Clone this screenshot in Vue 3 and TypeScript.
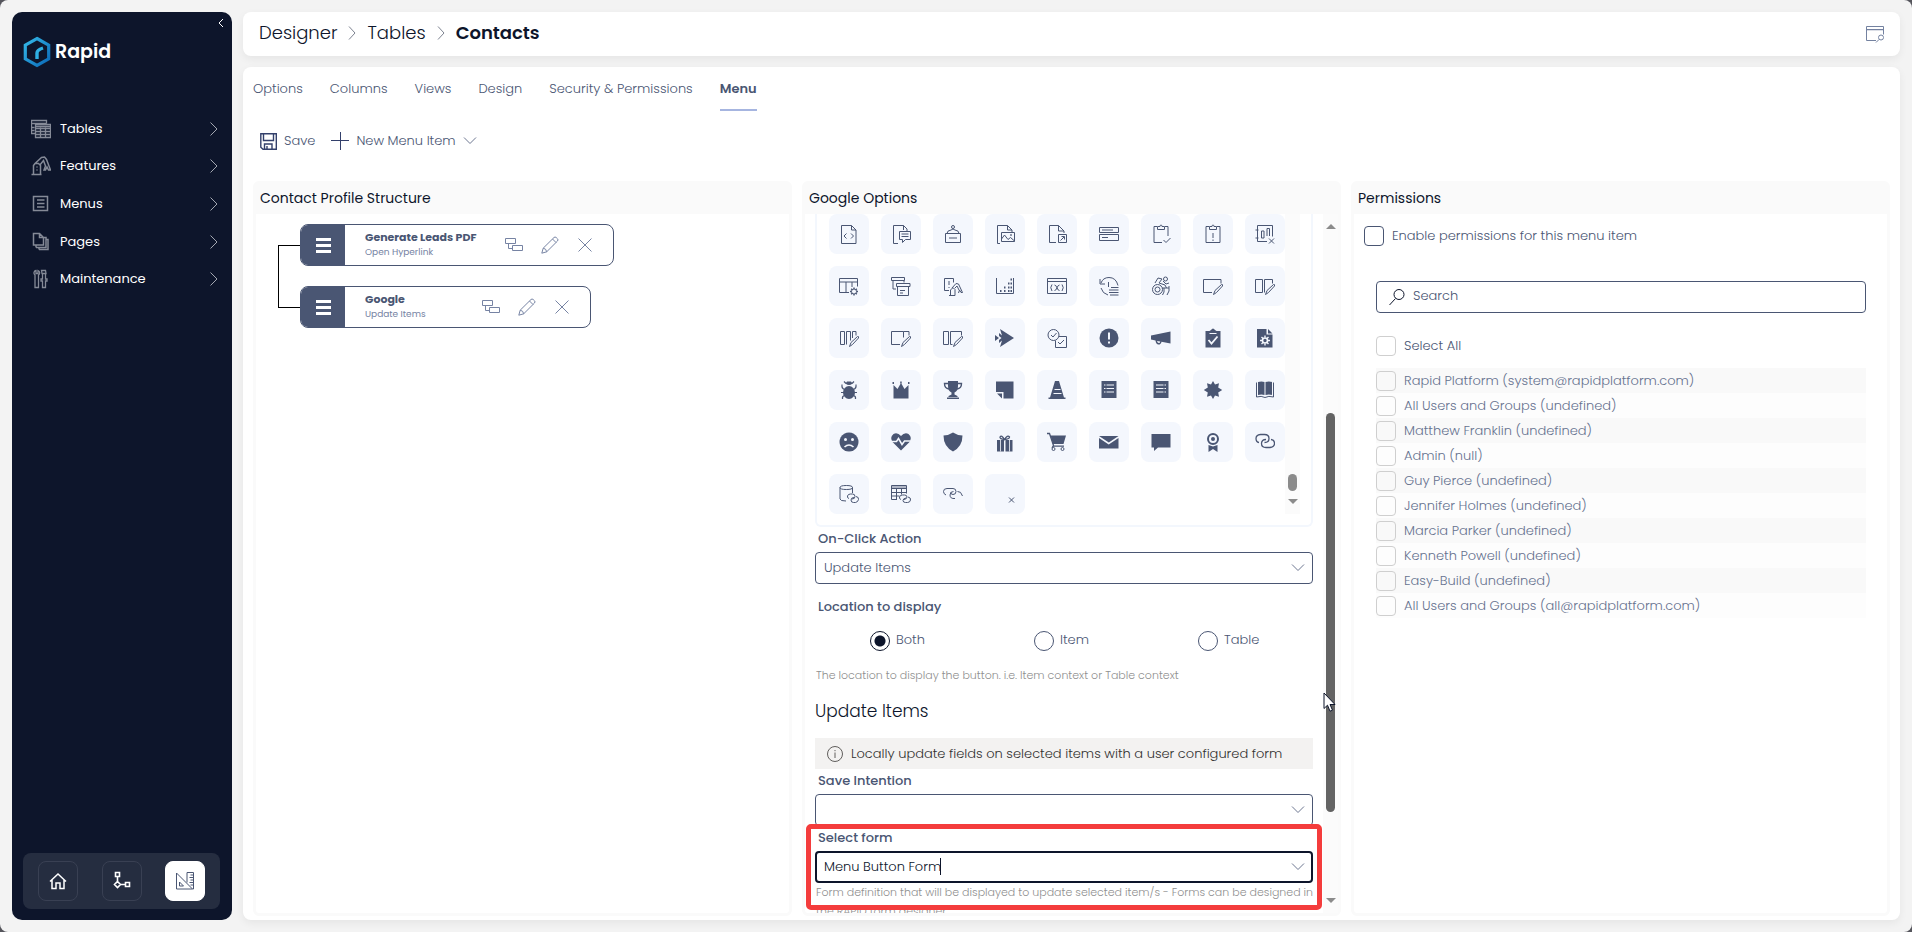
<script setup lang="ts">
import { ref } from 'vue'

type Glyph = string

const navItems: { label: string; icon: Glyph }[] = [
  {
    label: 'Tables',
    icon: '<path d="M4.5 14.500h-4v-13h15v3M.5 4.500h15M.5 8.500h3M.500 11.500h3M4.500 5.500h15v13h-15zM4.500 9.500h15M4.500 12.500h15M4.500 15.500h15M9.500 8.500v10M14.500 8.500v10M4.500 7.500h15" stroke-width="1.300"/>'
  },
  {
    label: 'Features',
    icon: '<path d="M.5 18.500h10M2.500 18.500v-9l1.500-2h3.500l2 2v9M4 7.500l6.500-6 3-.5 2 2.500 4 10.500h-2l-1.500-3-1.500 3h-1.500l1.500-4-2-5.500-4 5" stroke-width="1.500"/><path d="M5.500 11h1M5.500 14h1" stroke-width="1.500"/>'
  },
  {
    label: 'Menus',
    icon: '<path d="M2.500 2.500h14v14h-14zM6 6h7.500M6 9.500h7.500M6 13h7.500" stroke-width="1.500"/>'
  },
  {
    label: 'Pages',
    icon: '<path d="M2.500 1.500h6l4 4v7.500h-10zM8.500 1.500v4h4M5 15.500h10v-10h-2M8 17.500h9v-10h-2M5 13v2.500M8 15.500v2" stroke-width="1.500"/>'
  },
  {
    label: 'Maintenance',
    icon: '<path d="M5 1.500a2.500 2.500 0 0 0-1 4.500v12.500h3.500v-12.500a2.500 2.500 0 0 0-.5-4.500v3h-2zM10.500 1.500h4l.5 3h-4zM11.500 5v5h-1.500v2h1.500v6.500h3v-6.500h1.500v-2h-1.500v-5" stroke-width="1.300"/>'
  }
]

const tabs = ['Options', 'Columns', 'Views', 'Design', 'Security & Permissions', 'Menu']
const activeTab = ref('Menu')

const entries = [
  { title: 'Generate Leads PDF', action: 'Open Hyperlink' },
  { title: 'Google', action: 'Update Items' }
]

const pencil = '<path d="M10.500 18.500l1.500-4 6.500-6q1.500-.5 1 1.500l-6 6.500z" fill="#f4f7fd"/>'
const clip = '<path d="M6 2.500h-3v16h14v-16h-3M6.500 5.500v-3h2.500q0-1.500 1-1.500t1 1.500h2.500v3z"/>'
const solid = (d: string): Glyph => `<path d="${d}" fill="currentColor" stroke="none"/>`

const glyphs: Glyph[] = [
  '<path d="M2.500 1.500h10l4.500 4.500v13.500h-14.500zM12.500 1.500v4.500h4.500M7.500 9.500l-2.500 2.500 2.500 2.500M12 9.500l2.500 2.500-2.500 2.500"/>',
  '<path d="M7 19.500h-4.500v-18h10l3.500 3.500v2M12.500 1.500v4.500M8.500 7.500h11v8h-5l-3 3v-3h-3zM10.500 10h7M10.500 12.500h7"/>',
  '<path d="M2.500 9.500h15v9h-15zM6 14h8M4 9.500q0-3 4-3.500l2-1 2 1q4 .5 4 3.500"/><circle cx="10" cy="3" r="1.500"/>',
  '<path d="M5 19.500h-2.500v-18h10l4.500 4.500v2M12.500 1.500v4.500h4.500M6.500 8.500h13v9h-13zM6.500 15l3-4 3.500 4.500 2.500-2 4 3.500"/><circle cx="16" cy="11" r=".5"/>',
  '<path d="M9 18.500h-6.500v-17h9l5.500 5.500v2M11.500 1.500v5.500h5.500M11.500 10.500h8v8h-8zM13.500 16.500l3.500-3.500M14.500 12.500h3v3"/>',
  '<path d="M.5 3.500h19v5h-19zM.5 10.500h19v6h-19zM3 6h11M3 13.500h6"/>',
  '<path d="M6 2.500h-3v16h8M17 12v-9.500h-3M6.500 5.500v-3h2.500q0-1.500 1-1.500t1 1.500h2.500v3zM12.500 16l2.500 2.500 4.500-4.500"/>',
  clip + '<path d="M10 9v5M10 15.500v1.500"/>',
  '<path d="M12 17.500h-9.500v-16h15v11M.5 6h3M.5 14h3M6.500 14v-7h2.500v7zM12 12v-7.500h2.500v7.500M14 14.500l5 5M19 14.500l-5 5"/>',
  '<path d="M10 16.500h-9.500v-14h18v8M.5 6h18M7 6v10.500M13 6v5"/><circle cx="15" cy="15.500" r="2.500"/><path d="M15 11.500v1.500M15 18v1.500M11 15.500h1.500M17.500 15.500h1.500M12.200 12.700l1 1M16.800 17.300l1 1M17.800 12.700l-1 1M13.200 17.300l-1 1" stroke-width="1.400"/>',
  '<path d="M.5 1.500h13v3h-13zM2 4.500v8.500h3M13 4.500v2M5.500 7.500h13.500v3h-13.500zM6.500 10.500v9h11v-9M9 14.500h5M9 17h3"/>',
  '<path d="M6 14.500h-4.500v-12h9v4M6 5v4M6 11v1M6 19.500h6M7.500 19.500v-5.500l2-2h1l1.500 1.500v6M9 12l4-4.500 2.500.5 4 8.500h-1.500l-1.500-2.500-1 3M12 12l2-2 2 4"/>',
  '<path d="M1.500 2v15.500h17v-15.500"/><path d="M5 15h1.500M9 15h1.500M13 15h1.500M9 11.500h1.500M13 11.500h1.500M13 7.500h1.500M15.500 3.500h1.500M15.500 7.500h1.500M15.500 11.500h1.500M15.500 15h1.500" stroke-width="1.800"/>',
  '<path d="M.5 2.500h19v15h-19zM.5 5.500h19M5 8.500q-2.500 3 0 6.500M15 8.500q2.500 3 0 6.500M7.500 9q1.500 0 2.500 2.800t2.500 2.700M12.500 9q-1.500 0-2.500 2.800t-2.500 2.700"/>',
  '<path d="M2 7q2-5.500 8-5.500 7 0 9 8M1 3v5h5M2 12q1.500 5.500 7 7M9.500 6v5M12 11.500h7.500M10 14h9.500M10 16.500h9.500M11 19h8.500"/>',
  '<circle cx="6.500" cy="13.500" r="5"/><circle cx="6.500" cy="13.500" r="2.500"/><circle cx="14.500" cy="3" r="2"/><path d="M4 7l3-5 4 1-3 4M8 7l6 2 1.500 3M11 12h7M13 12v4l-1.500 3M18 10v5l-2 4M12 5l3 3 3-1"/>',
  '<path d="M9 16.500h-8.500v-13h17.500v4"/>' + pencil,
  '<path d="M.5 3.500h7v13h-7zM9.500 3.500h8v4M9.500 3.500v13"/>' + pencil,
  '<path d="M1.500 3.500h4v13h-4zM7.500 16.500v-13h4v9M13.500 10v-6.500h3.500v4"/>' + pencil,
  '<path d="M9 16.500h-8.500v-13h12v6M12.500 3.500h5.500v4"/>' + pencil,
  '<path d="M.5 3.500h5v13h-5zM7.500 16.500v-13h11v4M7.500 16.500h2"/>' + pencil,
  solid('M5 1l14 9-14 9 2-6.500-3 2.500v-3l2.500-2-2.500-2v-3l3 2.500zM0 7l4 3-4 3z'),
  '<circle cx="6.500" cy="7" r="5.500"/><path d="M4 7l2 2 3.500-4M12 8.500h7.500v11h-11v-7M11 14l2 2 4-4"/>',
  '<circle cx="10" cy="10" r="9.500" fill="currentColor" stroke="none"/><path d="M10 4.500v7M10 13.500v2" stroke="#f4f7fd" stroke-width="2"/>',
  solid('M0 7.500l19.500-4v12l-9-1.800q-.5 2.800-3 2.800t-3-4l-4.500-1zM6 13q.5 2 1.800 2t1.500-1.600z'),
  solid('M2.500 3h4l1.500-1q1-1.500 2-1.500t2 1.500l1.500 1h4v16.500h-15z') + '<path d="M5.500 12l3 3.500 6-7" stroke="#f4f7fd" stroke-width="1.800"/><path d="M6.500 5.500h7" stroke="#f4f7fd"/>',
  solid('M2 1h9.500v5.500h6v13h-15.500zM13 1l4.500 4.500h-4.500z') + '<circle cx="10" cy="12.500" r="2.500" stroke="#f4f7fd" stroke-width="1.600"/><path d="M10 7.500v2M10 15.500v2M5 12.500h2M13 12.500h2M6.500 9l1.500 1.500M12 14.500l1.500 1.500M13.500 9l-1.500 1.500M8 14.500l-1.500 1.500" stroke="#f4f7fd" stroke-width="1.400"/>',
  '<ellipse cx="10" cy="12.500" rx="6" ry="6.500" fill="currentColor" stroke="none"/><path d="M6.500 3.500q3.500 3 7 0l-1.500-2h-4z" fill="currentColor" stroke="none"/><path d="M5.500 9.500q-3-1-2.500-5M14.500 9.500q3-1 2.500-5M5 12.500h-3M15 12.500h3M5.500 15.500q-2.500.5-2 3.500M14.500 15.500q2.500.5 2 3.500M5 1.500l2 2M15 1.500l-2 2" stroke-width="1.200"/>',
  solid('M2.500 5l4 4 3.500-6 3.500 6 4-4v13.500h-15z') + '<path d="M1.500 3h1.500M9.200 2.500h1.500M17 3h1.500" stroke-width="1.800"/>',
  solid('M5 1h10v5q0 5-3.500 6.500v2l3 1.500v1h-9v-1l3-1.500v-2q-3.500-1.500-3.500-6.500zM4 17.500h12v1.500h-12z') + '<path d="M5 3.500h-3.500q0 5 4.500 5.500M15 3.500h3.500q0 5-4.500 5.500" stroke-width="1.400"/>',
  solid('M1 1.500h17.500v17h-10v-6.500h-7.500zM2 13.500h5v5z'),
  solid('M8 1h4l5 16.500h1.500v1.500h-17v-1.500h1.500z') + '<path d="M7.500 9.500h6M6.500 13.500h8" stroke="#f4f7fd" stroke-width="1.200"/>',
  solid('M2.500 1h15v17h-15z') + '<path d="M5 5h1.500M7.500 5h7.500M5 8.500h1.500M7.500 8.500h7.500M5 12h1.500M7.500 12h7.500" stroke="#f4f7fd" stroke-width="1.200"/>',
  solid('M2.500 1h15v17h-15z') + '<path d="M5 5h7.500M13.500 5h1.500M5 8.500h7.500M13.500 8.500h1.500M5 12h7.500M13.500 12h1.500" stroke="#f4f7fd" stroke-width="1.200"/>',
  solid('M10 1l2 3.500 4-1.200-.8 4.200 4 2.500-4 2.500.8 4.200-4-1.200-2 3.500-2-3.500-4 1.200.8-4.200-4-2.500 4-2.500-.8-4.200 4 1.200z'),
  solid('M3 2q3.500-1 6.500 0v13q-3-1-6.500 0zM10.500 2q3.500-1 6.500 0v13q-3-1-6.500 0z') + '<path d="M1.500 2.500v14.500q5-1.500 8.500.5 3.500-2 8.500-.5v-14.500"/>',
  solid('M10 .5a9.500 9.500 0 1 0 .01 0z') + '<path d="M5.500 15q4.500-4 9 0" stroke="#f4f7fd" stroke-width="1.600"/><circle cx="6.500" cy="7.500" r="1.500" fill="#f4f7fd" stroke="none"/><circle cx="13.500" cy="7.500" r="1.500" fill="#f4f7fd" stroke="none"/>',
  solid('M10 18.500l-8.500-8.500q-3-5 1-8 4-2 7.500 2 3.500-4 7.500-2 4 3 1 8z') + '<path d="M.5 9.500h5l2-3 3.500 6 2.500-3.500h6" stroke="#f4f7fd" stroke-width="1.500"/>',
  solid('M10 .5q4.500 3 9.500 3 0 11-9.500 16-9.500-5-9.500-16 5 0 9.500-3z'),
  solid('M2 8h7v11.500h-7zM10.500 8h7v11.500h-7z') + '<path d="M5.500 8v11.500M14.500 8v11.500" stroke="#f4f7fd" stroke-width=".8"/><path d="M9.500 7.500q-5-.5-4.500-2.500 1.500-2.500 4.500 2.500 3-5 5-2.500 0 2-5 2.500" stroke-width="1.300"/>',
  solid('M3.500 3.500h15.500l-2.500 8.500h-10.500zM6 13.500h11v1.200h-11.500z') + '<path d="M0 1.500h2.500l4 12-1.500 2.500" stroke-width="1.300"/><circle cx="6.500" cy="17" r="1.500"/><circle cx="15.500" cy="17" r="1.500"/>',
  solid('M0 4h19.500l-9.700 6.500zM0 6l9.700 6.500 9.800-6.500v10.500h-19.500z'),
  solid('M.5 2h19v13.500h-12.500l-4 3.500v-3.500h-2.500z'),
  '<circle cx="10" cy="7" r="5" stroke-width="2"/><circle cx="10" cy="7" r="2" fill="currentColor" stroke="none"/>' + solid('M5.500 13l4.500 1.500 4.500-1.500v7l-4.500-3-4.500 3z'),
  '<path d="M4 10.500q-3-.5-3-4t4.500-4h4q4.500 0 4.500 4t-4.500 4M16 7.500q3.500.5 3.500 4t-4.500 4h-4q-4.500 0-4.500-4t4.500-4" stroke-width="1.300"/>',
  '<path d="M13.500 9v-5.500q0-2-6.200-2t-6.300 2v11.500q0 2 6 2M1 3.500q0 2 6.300 2t6.200-2"/><path d="M10 14.500q-2-.5-1.500-2.500t3-2h2q2.500 0 2.500 2.500t-3 2.500M17 12.500q3 .5 2.500 3t-3 3h-2q-2.500 0-2.500-2.500t3-2.500"/>',
  '<path d="M6 15.500h-5.500v-14h15v8M.5 4.500h15M.5 8.500h15M.5 12h8M5.500 4.500v11M10.500 4.500v6"/><path d="M.5 3h15" stroke-width="2" opacity=".4"/><path d="M10 15.500q-2-.5-1.500-2.500t3-2h2q2.500 0 2.500 2t-3 2.500M17 13q3 .5 2.500 3t-3 2.500h-2q-2.500 0-2.500-2t3-2.500"/>',
  '<path d="M3 11q-2.500-1-2.500-3.500 0-3 3.500-3h6q3 0 3 3t-3 3q-2.500 0-2-2M12 14.500q-5 .5-5-3.500 0-3.500 3.500-3.500M14.500 7.500q3.500-.5 5 4.500"/>',
  '<path d="M14 13.500l5 5M19 13.500l-5 5"/>'
]

const action = ref('Update Items')
const intention = ref('')
const form = ref('Menu Button Form')
const place = ref('Both')
const places = ['Both', 'Item', 'Table']

const enabled = ref(false)
const query = ref('')
const all = ref(false)
const people = ref(
  [
    'Rapid Platform (system@rapidplatform.com)',
    'All Users and Groups (undefined)',
    'Matthew Franklin (undefined)',
    'Admin (null)',
    'Guy Pierce (undefined)',
    'Jennifer Holmes (undefined)',
    'Marcia Parker (undefined)',
    'Kenneth Powell (undefined)',
    'Easy-Build (undefined)',
    'All Users and Groups (all@rapidplatform.com)'
  ].map((name) => ({ name, picked: false }))
)
</script>

<template>
  <div class="page">
    <aside class="sidebar">
      <button class="collapse" type="button" aria-label="Collapse sidebar">
        <svg width="8" height="10" viewBox="0 0 8 10"><path d="M6 1L2 5l4 4" /></svg>
      </button>
      <a class="brand" href="#">
        <svg width="28" height="32" viewBox="0 0 28 32">
          <defs>
            <linearGradient id="hex" x1="0" y1="0" x2="1" y2="1">
              <stop offset="0" stop-color="#35b9e8" />
              <stop offset="1" stop-color="#0a69b8" />
            </linearGradient>
          </defs>
          <path d="M14 2.500l11.700 6.700v13.600L14 29.500 2.300 22.800V9.200z" stroke="url(#hex)" stroke-width="3.200" />
          <path d="M14 23v-6q0-3 6-5" stroke="#2fb0e4" stroke-width="3.400" />
        </svg>
        <span>Rapid</span>
      </a>
      <nav class="nav">
        <a v-for="item in navItems" :key="item.label" href="#">
          <svg class="nav-icon" width="20" height="20" viewBox="0 0 20 20" v-html="item.icon"></svg>
          <span>{{ item.label }}</span>
          <svg width="10" height="14" viewBox="0 0 10 14"><path d="M1.500 .5L8 7l-6.500 6.500" /></svg>
        </a>
      </nav>
      <div class="modes">
        <button type="button" aria-label="Home">
          <svg width="20" height="20" viewBox="0 0 20 20"><path d="M2 10.500L10 3l8 7.500M4 9v8.500h4v-5.500h4v5.500h4V9" stroke-width="1.500" /></svg>
        </button>
        <button type="button" aria-label="Workflows">
          <svg width="20" height="20" viewBox="0 0 20 20"><path d="M3.500 1.500h4v4h-4zM5.500 5.500v5M5.500 10.500l3 3-3 3-3-3zM8.500 13.500h5M13.500 11.500h4v4h-4z" stroke-width="1.600" /></svg>
        </button>
        <button type="button" class="on" aria-label="Designer">
          <svg width="20" height="20" viewBox="0 0 20 20"><path d="M1.500 2v16h16zM4.500 11v4h4zM12 11.500V1.500h6.500V18M15.500 4h3M14.500 6.500h4M15.500 9h3M14.500 11.500h4M15.500 14h3M17.500 18h1" /></svg>
        </button>
      </div>
    </aside>

    <div class="content">
      <header class="bar">
        <nav class="crumbs" aria-label="Breadcrumb">
          <a href="#">Designer</a>
          <svg width="8" height="14" viewBox="0 0 8 14"><path d="M1 .5L7 7l-6 6.500" /></svg>
          <a href="#">Tables</a>
          <svg width="8" height="14" viewBox="0 0 8 14"><path d="M1 .5L7 7l-6 6.500" /></svg>
          <strong>Contacts</strong>
        </nav>
        <button class="preview" type="button" aria-label="Preview">
          <svg width="20" height="20" viewBox="0 0 20 20"><path d="M11 16.500H1.500v-14h17v8M1.500 5.500h17" /><path d="M1.500 6h17" opacity=".5" /><circle cx="16" cy="13.500" r="2.500" /><path d="M14 15.500L11 18.500" /></svg>
        </button>
      </header>

      <main class="card">
        <div class="tabs" role="tablist">
          <button
            v-for="tab in tabs"
            :key="tab"
            type="button"
            role="tab"
            :aria-selected="tab === activeTab"
            :class="{ active: tab === activeTab }"
            @click="activeTab = tab"
          >{{ tab }}</button>
        </div>

        <div class="tools">
          <button type="button">
            <svg class="ink" width="17" height="17" viewBox="0 0 17 17"><path d="M.8 .8h15.500v15.500H3l-2.200-2zM3.500 .8v6.700h10V.8M4.500 16v-5h7.500v5M7 16v-3" stroke-width="1.400" /></svg>
            <span>Save</span>
          </button>
          <button type="button">
            <svg class="ink" width="18" height="18" viewBox="0 0 18 18"><path d="M9.500 0v18M0 8.500h18" /></svg>
            <span>New Menu Item</span>
            <svg width="14" height="8" viewBox="0 0 14 8"><path d="M1 .5l6 6 6-6" /></svg>
          </button>
        </div>

        <div class="panels">
          <section class="panel">
            <h2>Contact Profile Structure</h2>
            <div class="tree">
              <div class="bracket"></div>
              <ul>
                <li v-for="entry in entries" :key="entry.title">
                  <span class="grip"><i></i><i></i><i></i></span>
                  <span class="names">
                    <b>{{ entry.title }}</b>
                    <small>{{ entry.action }}</small>
                  </span>
                  <button type="button" aria-label="Add child">
                    <svg width="18" height="18" viewBox="0 0 18 18"><path d="M.5 2.500h10v5H.5zM3.500 7.500v5h4M7.500 9.500h10v5h-10z" /></svg>
                  </button>
                  <button type="button" aria-label="Edit">
                    <svg width="18" height="18" viewBox="0 0 18 18"><path d="M.8 17.200l1.400-5L13 1.500q1-1 2.200 0l1.300 1.300q1 1 0 2.200L5.700 15.800zM11.500 3l3.500 3.500M2.200 12.200q3 .3 3.500 3.600" /></svg>
                  </button>
                  <button type="button" aria-label="Remove">
                    <svg width="16" height="14" viewBox="0 0 16 14"><path d="M1.500 .5l13 13M14.500 .5l-13 13" /></svg>
                  </button>
                </li>
              </ul>
            </div>
          </section>

          <section class="panel">
            <h2>Google Options</h2>
            <div class="scroller">
              <div class="options">
                <div class="picker">
                  <div class="tiles">
                    <button v-for="(glyph, i) in glyphs" :key="i" type="button" :aria-label="`Icon ${i + 1}`">
                      <svg width="20" height="20" viewBox="0 0 20 20" v-html="glyph"></svg>
                    </button>
                  </div>
                  <div class="track small">
                    <div class="thumb"></div>
                    <i class="down"></i>
                  </div>
                </div>

                <label class="caption" for="action">On-Click Action</label>
                <div class="field">
                  <select id="action" v-model="action">
                    <option>Update Items</option>
                    <option>Open Hyperlink</option>
                  </select>
                  <svg width="14" height="8" viewBox="0 0 14 8"><path d="M1 .5l6 6 6-6" /></svg>
                </div>

                <fieldset>
                  <legend class="caption">Location to display</legend>
                  <div class="radios">
                    <label v-for="p in places" :key="p">
                      <input v-model="place" type="radio" name="place" :value="p" />
                      <span>{{ p }}</span>
                    </label>
                  </div>
                </fieldset>
                <p class="hint">The location to display the button. i.e. Item context or Table context</p>

                <h3>Update Items</h3>
                <p class="info">
                  <svg width="16" height="16" viewBox="0 0 16 16"><circle cx="8" cy="8" r="7.500" /><path d="M8 6.500v5.500M8 4v1.200" /></svg>
                  <span>Locally update fields on selected items with a user configured form</span>
                </p>

                <label class="caption" for="intention">Save Intention</label>
                <div class="field">
                  <select id="intention" v-model="intention">
                    <option value=""></option>
                    <option>Save</option>
                  </select>
                  <svg width="14" height="8" viewBox="0 0 14 8"><path d="M1 .5l6 6 6-6" /></svg>
                </div>

                <div class="marked">
                  <label class="caption" for="form">Select form</label>
                  <div class="field focused">
                    <input id="form" v-model="form" type="text" role="combobox" aria-expanded="false" />
                    <i class="caret"></i>
                    <svg width="14" height="8" viewBox="0 0 14 8"><path d="M1 .5l6 6 6-6" /></svg>
                  </div>
                  <p class="hint">Form definition that will be displayed to update selected item/s - Forms can be designed in the RAPID form designer</p>
                  <div class="outline"></div>
                </div>
              </div>
              <div class="track">
                <i class="up"></i>
                <div class="rail">
                  <div class="thumb">
                    <svg class="pointer" width="14" height="21" viewBox="0 0 14 21"><path d="M1 1v15.500l3.500-3.300 2.500 6 2.500-1-2.500-5.700h5z" /></svg>
                  </div>
                </div>
                <i class="down"></i>
              </div>
            </div>
          </section>

          <section class="panel">
            <h2>Permissions</h2>
            <div class="permissions">
              <label class="check enable">
                <input v-model="enabled" type="checkbox" />
                <span>Enable permissions for this menu item</span>
              </label>
              <div class="audience">
                <div class="search">
                  <svg width="18" height="18" viewBox="0 0 18 18"><circle cx="11" cy="6.500" r="5" /><path d="M7.500 10.500L1.500 17" /></svg>
                  <input v-model="query" type="search" placeholder="Search" aria-label="Search" />
                </div>
                <label class="check every">
                  <input v-model="all" type="checkbox" disabled />
                  <span>Select All</span>
                </label>
                <div class="people">
                  <label v-for="person in people" :key="person.name" class="check">
                    <input v-model="person.picked" type="checkbox" disabled />
                    <span>{{ person.name }}</span>
                  </label>
                </div>
              </div>
            </div>
          </section>
        </div>
      </main>
    </div>
  </div>
</template>

<style>
body {
  margin: 0;
  background: #55555c;
}
</style>

<style scoped>
* {
  box-sizing: border-box;
}
.page {
  display: flex;
  gap: 11px;
  height: 100vh;
  padding: 12px;
  border-radius: 8px;
  background: #f3f3f3;
  color: #4a5673;
  font: 300 13px/20px Poppins, Inter, sans-serif;
}
h2,
h3,
p,
ul,
fieldset {
  margin: 0;
  padding: 0;
  border: 0;
}
a {
  color: inherit;
  text-decoration: none;
}
button {
  padding: 0;
  border: 0;
  background: none;
  color: inherit;
  font: inherit;
  cursor: pointer;
}
svg {
  display: block;
  flex: none;
  fill: none;
  stroke: currentColor;
}

/* Sidebar */
.sidebar {
  position: relative;
  display: flex;
  flex: none;
  flex-direction: column;
  width: 220px;
  padding: 22px 12px 11px 11px;
  border-radius: 10px;
  background: #0d152b;
  color: #fff;
}
.collapse {
  position: absolute;
  top: 6px;
  right: 7px;
}
.brand {
  display: flex;
  align-items: center;
  gap: 4px;
  height: 36px;
  font-size: 19px;
  font-weight: 600;
}
.nav {
  display: grid;
  grid-auto-rows: 1fr;
  height: 188px;
  margin-top: 40px;
}
.nav a {
  display: flex;
  align-items: center;
  padding: 0 1px 0 8px;
  font-weight: 400;
}
.nav a span {
  flex: 1;
  margin-left: 9px;
}
.nav svg {
  color: #a3a7b1;
}
.nav .nav-icon {
  color: #858a97;
}
.modes {
  display: flex;
  justify-content: space-between;
  margin-top: auto;
  padding: 8px 15px;
  border-radius: 8px;
  background: #252d40;
}
.modes button {
  display: grid;
  place-items: center;
  width: 40px;
  height: 40px;
  border: 1px solid #394053;
  border-radius: 8px;
}
.modes .on {
  border-color: #fff;
  background: #fff;
  color: #4a5673;
}

/* Header */
.content {
  display: flex;
  flex: 1;
  flex-direction: column;
  gap: 11px;
  min-width: 0;
}
.bar,
.card {
  border-radius: 8px;
  background: #fff;
  box-shadow: 0 3px 8px rgba(0, 0, 0, 0.06);
}
.bar {
  display: flex;
  flex: none;
  align-items: center;
  justify-content: space-between;
  height: 44px;
  padding: 0 15px 0 16px;
}
.crumbs {
  display: flex;
  align-items: center;
  gap: 11px;
  padding-bottom: 2px;
  color: #0d152b;
  font-size: 18px;
}
.crumbs svg {
  color: #7d8290;
}
.crumbs strong {
  font-weight: 600;
}
.preview {
  color: #7482a0;
}
.card {
  display: flex;
  flex: 1;
  flex-direction: column;
  min-height: 0;
  padding: 0 10px 4px;
}
.tabs {
  display: flex;
  flex: none;
  gap: 27px;
  height: 44px;
}
.tabs button {
  padding-top: 2px;
  border-bottom: 2px solid transparent;
}
.tabs .active {
  border-color: #a6b5e0;
  font-weight: 600;
}
.tools {
  display: flex;
  flex: none;
  align-items: center;
  gap: 16px;
  height: 60px;
  margin-bottom: 10px;
  padding-left: 7px;
}
.tools button {
  display: flex;
  align-items: center;
  gap: 7px;
}
.tools svg {
  color: #6c7690;
}
.tools .ink {
  color: #33406b;
}

/* Panels */
.panels {
  display: grid;
  flex: 1;
  grid-template-columns: repeat(3, minmax(0, 1fr));
  grid-template-rows: minmax(0, 1fr);
  gap: 10px;
  min-height: 0;
}
.panel {
  display: flex;
  flex-direction: column;
  min-height: 0;
  border: 3px solid #fafafa;
  border-radius: 6px;
}
.panel h2 {
  flex: none;
  padding: 0 4px 2px;
  background: #fafafa;
  color: #0d152b;
  font-size: 14px;
  font-weight: 400;
  line-height: 28px;
}

/* Structure tree */
.tree {
  display: flex;
  padding: 10px 22px;
}
.bracket {
  width: 22px;
  height: 63px;
  margin-top: 21px;
  border: 1px solid #000;
  border-right: 0;
}
.tree ul {
  display: grid;
  gap: 20px;
  justify-items: start;
  list-style: none;
}
.tree li {
  display: flex;
  align-items: center;
  height: 42px;
  padding-right: 20px;
  overflow: hidden;
  border: 1px solid #4a5673;
  border-radius: 8px;
  color: #7683a3;
}
.tree li button + button {
  margin-left: 18px;
}
.grip {
  display: grid;
  align-content: center;
  justify-content: center;
  gap: 3px;
  width: 44px;
  height: 100%;
  background: #4a5673;
}
.grip i {
  width: 15px;
  height: 3px;
  background: #fff;
}
.names {
  display: grid;
  min-width: 88px;
  margin: 0 29px 0 20px;
  padding-bottom: 2px;
}
.names b {
  color: #4a5673;
  font-size: 11px;
  font-weight: 700;
  line-height: 15px;
}
.names small {
  color: #7683a3;
  font-size: 9px;
  font-weight: 400;
  line-height: 14px;
}

/* Options */
.scroller {
  display: flex;
  flex: 1;
  min-height: 0;
}
.options {
  flex: 1;
  min-width: 0;
  padding: 0 10px;
  overflow: hidden;
}
.picker {
  display: flex;
  padding: 0 11px 11px 12px;
  border: 2px solid #f3f7fd;
  border-top: 0;
  border-radius: 0 0 6px 6px;
}
.tiles {
  display: grid;
  flex: 1;
  grid-template-columns: repeat(9, 40px);
  grid-auto-rows: 40px;
  justify-content: space-between;
  gap: 12px 0;
}
.tiles button {
  display: grid;
  place-items: center;
  border-radius: 8px;
  background: #f4f7fd;
}
.track {
  display: flex;
  flex: none;
  flex-direction: column;
  align-items: center;
  width: 15px;
  padding: 10px 0;
  background: #fbfbfb;
}
.track .thumb {
  position: relative;
  width: 9px;
  border-radius: 5px;
  background: #636363;
}
.track.small {
  justify-content: flex-end;
  gap: 8px;
}
.small .thumb {
  height: 17px;
  background: #8b8b8b;
}
.up,
.down {
  border: 5px solid transparent;
}
.up {
  border-top: 0;
  border-bottom-color: #8b8b8b;
}
.down {
  border-bottom: 0;
  border-top-color: #8b8b8b;
}
.rail {
  display: grid;
  flex: 1;
  grid-template-rows: 184fr 399fr 86fr;
}
.rail .thumb {
  grid-row: 2;
}
.pointer {
  position: absolute;
  top: 70%;
  left: -3px;
  fill: #fff;
  stroke: #0d152b;
}
.caption {
  display: block;
  padding: 0 3px 2px;
  font-weight: 500;
  line-height: 23px;
}
.field {
  position: relative;
}
.field svg {
  position: absolute;
  top: 12px;
  right: 8px;
  color: #6c7690;
  pointer-events: none;
}
.field select,
.field input {
  display: block;
  width: 100%;
  height: 32px;
  padding: 0 30px 0 8px;
  border: 1px solid #4a5673;
  border-radius: 4px;
  outline: 0;
  background: #fff;
  color: #4a5673;
  font: inherit;
  appearance: none;
}
.field.focused input {
  padding-left: 7px;
  border: 2px solid #0d152b;
  color: #0d152b;
  caret-color: transparent;
}
.caret {
  position: absolute;
  top: 7px;
  left: 125px;
  width: 1px;
  height: 17px;
  background: #0d152b;
}
fieldset {
  padding-top: 11px;
}
legend {
  float: left;
  width: 100%;
}
.radios {
  display: grid;
  clear: both;
  grid-template-columns: repeat(3, 1fr);
  padding-right: 6px;
}
.radios label {
  display: flex;
  align-items: center;
  gap: 6px;
  height: 42px;
  padding-left: 55px;
}
.radios span {
  padding-bottom: 2px;
}
.radios input {
  width: 20px;
  height: 20px;
  margin: 0;
  border: 1px solid #4a5673;
  border-radius: 50%;
  background: #fff;
  appearance: none;
}
.radios input:checked {
  border-color: #0d152b;
  background: radial-gradient(circle, #0d152b 5px, #fff 6px);
}
.hint {
  margin-right: -4px;
  padding-left: 1px;
  color: #8f8f8f;
  font-size: 11px;
  line-height: 19px;
}
fieldset + .hint {
  padding-top: 4px;
}
.options h3 {
  color: #0d152b;
  font-size: 17px;
  font-weight: 300;
  line-height: 53px;
}
.info {
  display: flex;
  align-items: center;
  gap: 8px;
  height: 31px;
  padding-left: 12px;
  background: #f3f2f1;
  color: #323130;
}
.info svg {
  color: #605e5c;
}
.marked {
  position: relative;
}
.outline {
  position: absolute;
  top: -2px;
  right: -9px;
  left: -9px;
  height: 86px;
  border: 5px solid #f43c3c;
  border-radius: 5px;
  pointer-events: none;
}

/* Permissions */
.permissions {
  padding: 12px 10px;
}
.check {
  display: flex;
  align-items: center;
  gap: 8px;
}
.check input {
  width: 20px;
  height: 20px;
  margin: 0;
  border: 1px solid #4a5673;
  border-radius: 4px;
  background: transparent;
  appearance: none;
}
.check input:disabled {
  border-color: #cfcfcf;
}
.audience {
  padding: 35px 11px 0 12px;
}
.search {
  display: flex;
  align-items: center;
  gap: 7px;
  height: 32px;
  padding: 0 11px;
  border: 1px solid #4a5673;
  border-radius: 4px;
}
.search svg {
  color: #0d152b;
}
.search input {
  flex: 1;
  min-width: 0;
  padding: 0 0 2px;
  border: 0;
  outline: 0;
  background: none;
  color: #4a5673;
  font: inherit;
}
.search input::placeholder {
  color: #4a5673;
  opacity: 1;
}
.every {
  margin: 23px 0 12px;
}
.people .check {
  height: 25px;
  color: #66728f;
}
.people .check:nth-child(odd) {
  background: #f9f9f9;
}
.people .check:nth-child(even) {
  background: #fdfdfd;
}
</style>
